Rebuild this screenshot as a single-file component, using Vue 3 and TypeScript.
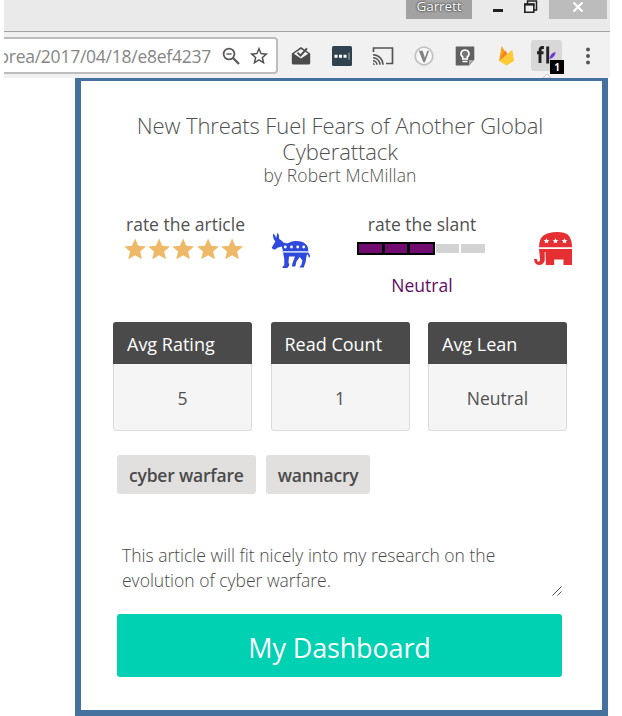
<script setup lang="ts">
import { ref } from 'vue'

interface Stat {
  label: string
  value: string
}

const rating = ref(5)
const slant = ref(3)
const note = ref('This article will fit nicely into my research on the evolution of cyber warfare.')
const tags: string[] = ['cyber warfare', 'wannacry']
const stats: Stat[] = [
  { label: 'Avg Rating', value: '5' },
  { label: 'Read Count', value: '1' },
  { label: 'Avg Lean', value: 'Neutral' },
]
</script>

<template>
  <div class="page">
    <header class="chrome">
      <div class="titlebar">
        <span class="profile">Garrett</span>
        <svg class="win-min" viewBox="0 0 12 20"><path d="M1 9h10v3H1z" fill="#222" /></svg>
        <svg class="win-max" viewBox="0 0 16 20">
          <path d="M4.5 4V1h9v9H11" fill="none" stroke="#222" stroke-width="1.5" />
          <path d="M1.8 4h9v8.300h-9z" fill="#eee" stroke="#222" stroke-width="1.6" />
          <path d="M1 3.6h10.600v2H1z" fill="#222" />
        </svg>
        <span class="win-close">
          <svg viewBox="0 0 12 12"><path d="M1.500 1.500l9 9M10.500 1.500l-9 9" stroke="#fff" stroke-width="2.200" /></svg>
        </span>
      </div>
      <div class="toolbar">
        <div class="omnibox">
          <span class="url">orea/2017/04/18/e8ef4237</span>
          <svg class="ic-zoom" viewBox="0 0 18 18" fill="none" stroke="#5a5a5a">
            <circle cx="7" cy="7" r="5.400" stroke-width="1.800" />
            <path d="M4.400 7h5.200" stroke-width="1.400" /><path d="M11 11l6 6" stroke-width="2.300" />
          </svg>
          <svg class="ic-star" viewBox="0 0 24 24">
            <path fill="#505050" d="M22 9.240l-7.190-.62L12 2 9.190 8.630 2 9.240l5.460 4.730L5.820 21 12 17.270 18.180 21l-1.630-7.030L22 9.240zM12 15.400l-3.760 2.270 1-4.280-3.320-2.880 4.380-.38L12 6.100l1.710 4.040 4.380.38-3.320 2.880 1 4.280L12 15.400z" />
          </svg>
        </div>
        <div class="extensions">
          <svg class="ext" viewBox="0 0 20 20">
            <path d="M.8 7.500L10 1l9.200 6.500V17q0 1.500-1.500 1.500H2.300Q.8 18.500.8 17z" fill="#4b4b4b" />
            <path d="M2.800 7.800L10 3l7.200 4.800L10 12.500z" fill="#f1f1f1" />
            <path d="M6.500 6.600l3 3 6.500-7.300" fill="none" stroke="#4b4b4b" stroke-width="2" />
          </svg>
          <svg class="ext" viewBox="0 0 20 20">
            <rect width="20" height="20" rx="1.500" fill="#30424f" />
            <path d="M2.500 8.700h3v3h-3zM7 8.700h3v3H7zM11.500 8.700h3v3h-3z" fill="#fff" />
            <path d="M17 6.500v7.200" stroke="#a9b3b9" />
          </svg>
          <svg class="ext cast" viewBox="0 0 22 20" fill="none" stroke="#555" stroke-width="1.700">
            <path d="M1.500 6V2h19v15.500H14" />
            <path d="M1 14.800a4 4 0 0 1 4 4M1 11.700a7 7 0 0 1 7 7M1 8.700a10 10 0 0 1 10 10" stroke-width="1.500" />
            <path d="M1 16.500l2.300 2.300H1z" fill="#555" stroke="none" />
          </svg>
          <svg class="ext" viewBox="0 0 20 20">
            <circle cx="10" cy="10" r="8.800" fill="#f8f8f8" stroke="#c2c2c2" stroke-width="1.800" />
            <path d="M4.800 4.800h3.900l2.200 6.900 2.300-6.900h1.900L11 16.200H9.300z" fill="#848484" />
          </svg>
          <svg class="ext" viewBox="0 0 20 20">
            <path d="M1.500.5h17q.8 0 .8.800V14L14 19.500H1.500q-.8 0-.8-.8V1.300q0-.8.8-.8z" fill="#606060" />
            <path d="M19.300 14H14v5.500z" fill="#aaa" />
            <path d="M7.700 13v-2C4.500 8.500 6 4 10 4s5.500 4.500 2.300 7v2z" fill="#777" stroke="#fff" stroke-width="1.600" />
            <path d="M7.500 15.500h5" stroke="#fff" stroke-width="1.500" />
          </svg>
          <svg class="ext" viewBox="0 0 20 20">
            <path d="M3 15L5.500 1q.3-.9.900 0l3 5.500z" fill="#f6a21c" />
            <path d="M3 15L8.800 4.800q.5-.7.900 0L12.500 10z" fill="#f58220" />
            <path d="M3 15L15.600 4.300q.7-.4.900.4L18 15l-6.700 4q-.8.500-1.600 0z" fill="#ffca36" />
          </svg>
          <span class="active-ext">
            <svg viewBox="0 0 31 31">
              <path d="M12.900 7.500H11.500q-2.500 0-2.500 3.500v12M6 12.800h6.500" fill="none" stroke="#222" stroke-width="2.900" />
              <path d="M16.700 6.500v17" stroke="#222" stroke-width="2.900" />
              <path d="M18.200 19q1.500-6.500 6.500-7-1 6-6.500 7z" fill="#6c35d8" />
            </svg>
            <span class="badge">1</span>
          </span>
          <svg class="menu" viewBox="0 0 6 20" fill="#555"><circle cx="3" cy="3.400" r="2" /><circle cx="3" cy="10" r="2" /><circle cx="3" cy="16.600" r="2" /></svg>
        </div>
      </div>
    </header>

    <main class="popup">
      <svg class="pointer" viewBox="0 0 8 4"><path d="M0 4l4-4 4 4z" fill="#fff" stroke="#bbb" stroke-width=".8" /></svg>
      <h1 class="title">New Threats Fuel Fears of Another Global<br />Cyberattack</h1>
      <p class="byline">by Robert McMillan</p>

      <section class="ratings">
        <div class="rate">
          <span class="rate-label">rate the article</span>
          <div class="stars">
            <svg v-for="n in 5" :key="n" viewBox="0 0 24 23" @click="rating = n">
              <path :fill="n <= rating ? '#edb867' : '#d3d3d3'" d="M12 .2l3.400 7.700 8.400.8-6.300 5.600 1.900 8.300L12 18.300l-7.400 4.300 1.900-8.300L.2 8.700l8.400-.8z" />
            </svg>
          </div>
        </div>
        <svg class="donkey" viewBox="0 0 39 38">
          <g fill="#2f49dc">
            <path d="M2 1.500q2.300 1.200 3.200 4.500L6.500.5q2.300 2.500 1.700 6.500 3 1.500 4.300 3.500 2 1.300 5.500.2 3-2 7-1.700 7 .1 9.500 3 3.200 3 2.600 7H12l-1.200-4.500-4.500 1.300-2 1.700Q1.200 18 .8 15.500L4.300 9.500Q1.500 6 2 1.500z" />
            <path d="M12 20.500h25q2.700 1.800 1.600 5l-1-.3q.1-2.500-1.600-3l-.8 3.500-.5 4-2 5.800h-4.200q.2-1.500 1.900-2.500l1-4.400-2.700-3.500-3.200 4.400-1.200 5h-3.500l.7-3.300 2.500-6.700h-6l-.5 5.500.8 3.300-2 2.700h-5q0-1.800 2-2.800v-6.200z" />
          </g>
          <g fill="#fff"><circle cx="14.300" cy="15" r="1.400" /><circle cx="20.500" cy="15" r="1.400" /><circle cx="26.700" cy="15" r="1.400" /><circle cx="32.700" cy="15" r="1.400" /></g>
          <path d="M11 19.700h27" stroke="#bcc6f6" stroke-width="1" />
        </svg>
        <div class="slant">
          <span class="rate-label slant-label">rate the slant</span>
          <div class="meter">
            <i v-for="n in 5" :key="n" :class="{ on: n <= slant }" @click="slant = n"></i>
          </div>
          <span class="lean">Neutral</span>
        </div>
        <svg class="elephant" viewBox="0 0 38 33">
          <path d="M5 15.300Q5 7 9.500 3.500 14 0 23 0t12 4 3 11.300z" fill="#e52f33" />
          <path d="M5 16.900h33V33h-8.500v-5.500h-9.300V33h-8.400v-6.500H11q-.6 6.500-5.500 6.500Q.5 33 0 27h2.800q.3 3 1.800 3 1.600 0 1.400-3.500Z" fill="#e52f33" />
          <path d="M11.200 20v7" stroke="#fff" stroke-width=".9" />
          <g fill="#fff">
            <path d="M12.500 6.200l.9 1.700 1.900.2-1.400 1.300.4 1.900-1.800-.9-1.800.9.400-1.900-1.400-1.300 1.900-.2z" />
            <path d="M21.500 6.200l.9 1.700 1.900.2-1.400 1.300.4 1.900-1.800-.9-1.800.9.400-1.900-1.400-1.300 1.900-.2z" />
            <path d="M30.500 6.200l.9 1.700 1.900.2-1.400 1.300.4 1.900-1.800-.9-1.800.9.400-1.900-1.400-1.300 1.900-.2z" />
          </g>
        </svg>
      </section>

      <section class="stats">
        <article v-for="s in stats" :key="s.label" class="card">
          <h2>{{ s.label }}</h2>
          <p>{{ s.value }}</p>
        </article>
      </section>

      <div class="tags">
        <span v-for="t in tags" :key="t" class="tag">{{ t }}</span>
      </div>

      <div class="note-wrap">
        <textarea v-model="note" class="note" spellcheck="false"></textarea>
        <svg class="grip" viewBox="0 0 10 10" stroke="#555" stroke-width="1"><path d="M.5 9.500l9-9M5.500 9.500l4-4" /></svg>
      </div>
      <button class="dashboard" type="button">My Dashboard</button>
    </main>
  </div>
</template>

<style>
body {
  background: #fff;
  overflow: hidden;
}
</style>

<style scoped>
.page {
  width: 622px;
  height: 716px;
  overflow: hidden;
  font-family: 'Open Sans', 'Noto Sans', sans-serif;
  color: #505050;
}
.page * {
  box-sizing: border-box;
}
svg {
  display: block;
  flex: none;
}
.chrome {
  width: 606px;
  height: 78px;
  margin-left: 4px;
  overflow: hidden;
  background: #f1f1f1;
}
.titlebar {
  display: flex;
  height: 32px;
  padding-left: 402px;
  background: #eaeaea;
  border-bottom: 1px solid #a3a3a3;
}
.profile {
  width: 66px;
  height: 19px;
  background: #a2a2a2;
  color: #fff;
  font-size: 13.500px;
  line-height: 13px;
  text-align: center;
  letter-spacing: -0.1px;
  text-shadow: 0 0 2px #333, 0 0 2px #444;
}
.win-min {
  width: 12px;
  height: 20px;
  margin-left: 20px;
}
.win-max {
  width: 16px;
  height: 20px;
  margin-left: 19px;
}
.win-close {
  display: flex;
  justify-content: center;
  width: 58px;
  height: 19px;
  margin-left: 10px;
  background: #bcbcbc;
}
.win-close svg {
  width: 12px;
  height: 12px;
  margin-top: 1px;
}
.toolbar {
  display: flex;
  height: 46px;
}
.omnibox {
  display: flex;
  align-items: center;
  width: 282px;
  height: 37px;
  margin: 5px 0 0 -8px;
  border: 2px solid #bdbdbd;
  border-radius: 4px;
  background: #fff;
}
.url {
  width: 217px;
  margin-left: -4px;
  flex: none;
  font-size: 17.500px;
  line-height: 24px;
  letter-spacing: -0.25px;
  color: #858585;
  white-space: nowrap;
  text-align: right;
}
.ic-zoom {
  width: 18px;
  height: 18px;
  margin-left: 11px;
}
.ic-star {
  width: 22px;
  height: 22px;
  margin-left: 8px;
}
.extensions {
  display: flex;
  align-items: center;
  height: 47px;
  gap: 21px;
  margin-left: 13px;
}
.ext {
  width: 20px;
  height: 20px;
}
.cast {
  width: 22px;
  margin: 0 -1px;
}
.active-ext {
  position: relative;
  width: 31px;
  height: 31px;
  margin-left: -6px;
  border-radius: 3px;
  background: #d8d8d8;
}
.badge {
  position: absolute;
  left: 19px;
  top: 20px;
  width: 14px;
  height: 14px;
  background: #000;
  color: #fff;
  font-size: 10px;
  font-weight: 700;
  line-height: 14px;
  text-align: center;
}
.menu {
  width: 6px;
  height: 20px;
  margin-left: 2px;
}
.popup {
  position: relative;
  width: 533px;
  height: 638px;
  margin-left: 75px;
  padding: 31px 35px 0 32px;
  border: 6px solid #44719d;
  border-top-width: 3px;
  background: #fff;
}
.pointer {
  position: absolute;
  left: 462px;
  top: -7px;
  width: 8px;
  height: 4px;
}
.title {
  margin: 0;
  font-size: 22px;
  font-weight: 300;
  line-height: 26px;
  letter-spacing: -0.1px;
  text-align: center;
  white-space: nowrap;
}
.title,
.byline {
  width: 454px;
}
.byline {
  margin: -1px 0 0;
  font-size: 17.500px;
  font-weight: 300;
  line-height: 24px;
  letter-spacing: 0.12px;
  text-align: center;
}
.ratings {
  display: flex;
  align-items: flex-start;
  height: 135px;
  padding: 25px 0 0 12px;
}
.rate {
  width: 119px;
}
.rate-label {
  display: block;
  padding-left: 1px;
  font-size: 17.500px;
  line-height: 24px;
  white-space: nowrap;
}
.stars {
  display: flex;
  gap: 2px;
  margin: 2px 0 0 -1px;
}
.stars svg {
  width: 22.200px;
  height: 22px;
}
.donkey {
  width: 39px;
  height: 38px;
  margin: 20px 0 0 27px;
}
.slant {
  display: flex;
  flex-direction: column;
  align-items: center;
  width: 130px;
  margin-left: 47px;
}
.slant-label {
  padding-left: 2px;
}
.meter {
  display: flex;
  width: 128px;
  height: 13px;
  margin-top: 6px;
}
.meter i {
  width: 24px;
  height: 9px;
  margin: 2px 0 0 2px;
  background: #d3d3d3;
}
.meter i.on {
  width: 27px;
  height: 13px;
  margin: 0 -1px 0 0;
  border: 2px solid #000;
  background: #720b70;
}
.lean {
  padding-left: 2px;
  margin-top: 18px;
  font-size: 17.500px;
  line-height: 24px;
  color: #640a64;
}
.elephant {
  width: 38px;
  height: 33px;
  margin: 20px 0 0 49px;
}
.stats {
  display: grid;
  grid-template-columns: repeat(3, 139px);
  gap: 18.500px;
  width: 454px;
}
.card {
  height: 109px;
  border: 1px solid #dbdbdb;
  border-radius: 3px;
  background: #f5f5f5;
}
.card h2 {
  height: 42px;
  margin: -1px -1px 0;
  padding-left: 14px;
  border-radius: 3px 3px 0 0;
  background: #4a4a4a;
  color: #fff;
  font-size: 18px;
  font-weight: 500;
  line-height: 44px;
}
.card p {
  margin: 0;
  font-size: 17.500px;
  line-height: 68px;
  text-align: center;
}
.tags {
  display: flex;
  gap: 10px;
  margin: 24px 0 0 4px;
}
.tag {
  height: 39px;
  padding: 0 12px;
  border-radius: 3px;
  background: #e1e0df;
  color: #4a4a4a;
  font-size: 17.500px;
  font-weight: 600;
  line-height: 40px;
  letter-spacing: -0.2px;
}
.note-wrap {
  position: relative;
  height: 64px;
  margin: 49px 0 0 4px;
  width: 445px;
}
.note {
  display: block;
  width: 100%;
  height: 54px;
  padding: 0 5px;
  border: 0;
  outline: 0;
  overflow: hidden;
  resize: none;
  background: transparent;
  color: #4a4a4a;
  font-family: inherit;
  font-size: 17.500px;
  font-weight: 300;
  line-height: 25px;
}
.grip {
  position: absolute;
  right: 0;
  bottom: 11px;
  width: 10px;
  height: 10px;
}
.dashboard {
  display: block;
  width: 445px;
  height: 63px;
  margin: 7px 0 0 4px;
  padding: 3px 0 0;
  border: 0;
  border-radius: 3px;
  background: #00d1b2;
  color: #fff;
  font-family: inherit;
  font-size: 27px;
  letter-spacing: -0.15px;
}
</style>
